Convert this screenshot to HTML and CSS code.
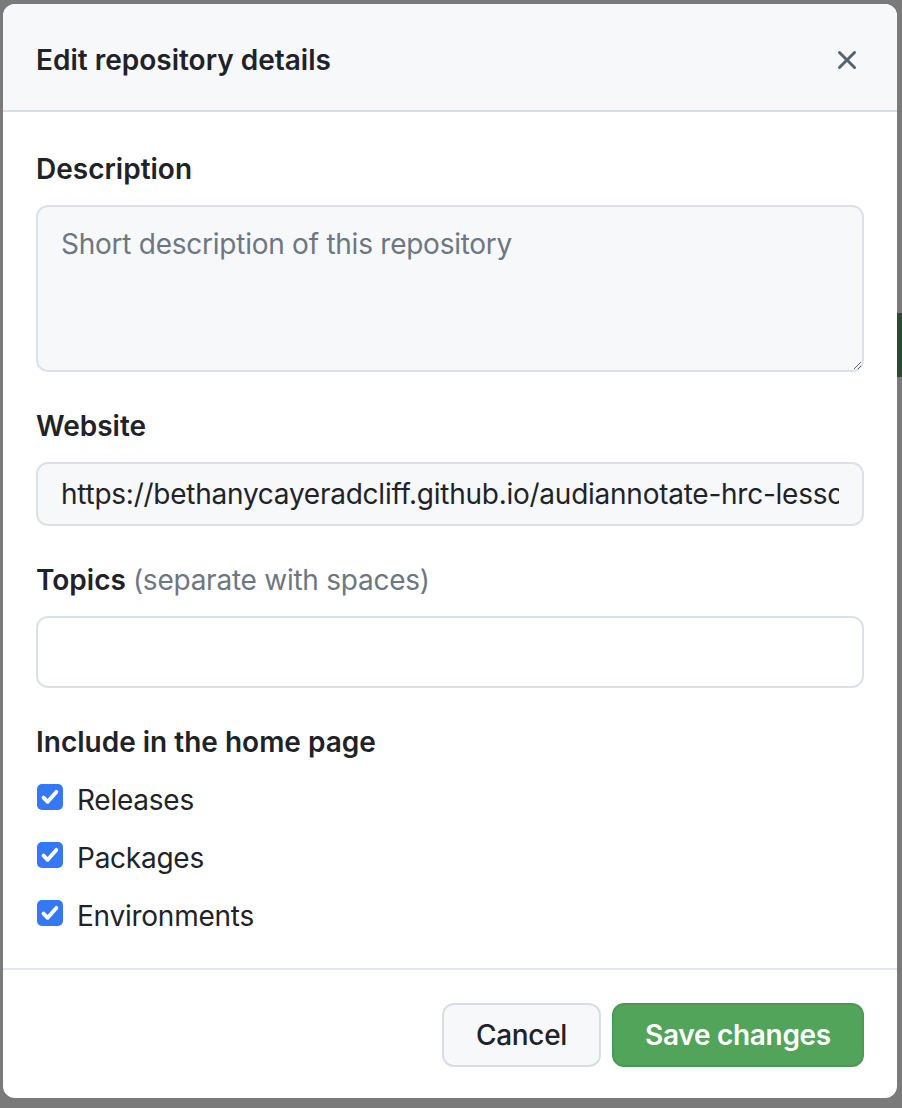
FILE: index.html
```html
<!DOCTYPE html>
<html lang="en">
<head>
<meta charset="utf-8">
<title>Edit repository details</title>
<link rel="stylesheet" href="styles.css">
</head>
<body>
<div class="backdrop">
  <div class="peek-green"></div>
</div>
<div class="dialog" role="dialog" aria-labelledby="dlg-title">
  <header class="dialog-header">
    <h1 id="dlg-title" class="dialog-title">Edit repository details</h1>
    <button class="close-btn" aria-label="Close">
      <svg viewBox="0 0 16 16" width="32" height="32" aria-hidden="true">
        <path fill="currentColor" d="M3.72 3.72a.75.75 0 0 1 1.06 0L8 6.94l3.220-3.22a.749.749 0 0 1 1.275.326.749.749 0 0 1-.215.734L9.06 8l3.22 3.22a.749.749 0 0 1-.326 1.275.749.749 0 0 1-.734-.215L8 9.06l-3.22 3.22a.751.751 0 0 1-1.042-.018.751.751 0 0 1-.018-1.042L6.94 8 3.72 4.78a.75.75 0 0 1 0-1.06Z"/>
      </svg>
    </button>
  </header>
  <div class="dialog-body">
    <div class="form-group">
      <label class="label" for="desc">Description</label>
      <textarea id="desc" class="textarea" placeholder="Short description of this repository"></textarea>
    </div>
    <div class="form-group">
      <label class="label" for="web">Website</label>
      <input id="web" class="input input-filled" type="text" value="https://bethanycayeradcliff.github.io/audiannotate-hrc-lessons/">
    </div>
    <div class="form-group">
      <label class="label" for="topics">Topics <span class="label-note">(separate with spaces)</span></label>
      <input id="topics" class="input input-empty" type="text">
    </div>
    <div class="form-group checks">
      <div class="label">Include in the home page</div>
      <label class="check-row"><span class="check-box"><svg viewBox="0 0 16 16" width="22" height="22"><path fill="none" stroke="#fff" stroke-width="2.8" stroke-linecap="round" stroke-linejoin="round" d="M3.3 8.4l3 3.1 6.3-7.2"/></svg></span><span class="check-label">Releases</span></label>
      <label class="check-row"><span class="check-box"><svg viewBox="0 0 16 16" width="22" height="22"><path fill="none" stroke="#fff" stroke-width="2.8" stroke-linecap="round" stroke-linejoin="round" d="M3.3 8.4l3 3.1 6.3-7.2"/></svg></span><span class="check-label">Packages</span></label>
      <label class="check-row"><span class="check-box"><svg viewBox="0 0 16 16" width="22" height="22"><path fill="none" stroke="#fff" stroke-width="2.8" stroke-linecap="round" stroke-linejoin="round" d="M3.3 8.4l3 3.1 6.3-7.2"/></svg></span><span class="check-label">Environments</span></label>
    </div>
  </div>
  <footer class="dialog-footer">
    <button class="btn btn-default">Cancel</button>
    <button class="btn btn-primary">Save changes</button>
  </footer>
</div>
</body>
</html>
```
FILE: styles.css
```css
* { box-sizing: border-box; }

html, body {
  margin: 0;
  padding: 0;
}

body {
  width: 902px;
  height: 1108px;
  background: #7a7a7a;
  font-family: Inter, "Liberation Sans", sans-serif;
  color: #1f2328;
  position: relative;
  overflow: hidden;
  padding: 4px 5px 0 3px;
}

.backdrop {
  position: absolute;
  inset: 0;
  z-index: 0;
}

.peek-green {
  position: absolute;
  right: 0;
  top: 313px;
  width: 6px;
  height: 64px;
  background: #2c4a2f;
}

.dialog {
  position: relative;
  z-index: 1;
  width: 894px;
  height: 1094px;
  background: #ffffff;
  border-radius: 12px;
  overflow: hidden;
  display: flex;
  flex-direction: column;
}

.dialog-header {
  height: 108px;
  flex: none;
  background: #f6f8fa;
  border-bottom: 2px solid #d8dee4;
  display: flex;
  align-items: center;
  justify-content: space-between;
  padding: 6px 30px 0 33px;
}

.dialog-title {
  margin: 0;
  font-size: 28px;
  line-height: 40px;
  font-weight: 600;
  color: #1f2328;
}

.close-btn {
  border: 0;
  background: transparent;
  color: #59636e;
  padding: 4px;
  display: flex;
  cursor: pointer;
}

.dialog-body {
  flex: 1;
  padding: 37px 33px 0 33px;
}

.form-group + .form-group {
  margin-top: 34px;
}

.label {
  display: block;
  font-size: 28px;
  line-height: 40px;
  font-weight: 600;
  color: #1f2328;
  margin-bottom: 16px;
}

.label-note {
  font-weight: 400;
  color: #6e7781;
  letter-spacing: -0.25px;
}

.textarea,
.input {
  display: block;
  width: 828px;
  font-family: inherit;
  font-size: 28px;
  line-height: 40px;
  letter-spacing: -0.25px;
  color: #1f2328;
  border: 2px solid #dde1e6;
  border-radius: 12px;
  outline: none;
  margin: 0;
}

.textarea {
  height: 167px;
  padding: 17px 23px 12px;
  background: #f6f8fa;
  resize: vertical;
}

.textarea::placeholder {
  color: #6e7781;
  opacity: 1;
}

.input {
  padding: 10px 23px;
}

.input-filled {
  height: 64px;
  background: #f6f8fa;
}

.input-empty {
  height: 72px;
  background: #ffffff;
}

.checks .label {
  margin-bottom: 8px;
}

.check-row {
  display: flex;
  align-items: flex-start;
  height: 58px;
  padding-top: 10px;
}

.check-box {
  width: 26px;
  height: 26px;
  margin: 4px 0 0 1px;
  border-radius: 5px;
  background: #3478f6;
  display: flex;
  align-items: center;
  justify-content: center;
  flex: none;
}

.check-label {
  margin-left: 14px;
  font-size: 28px;
  line-height: 40px;
  letter-spacing: -0.25px;
  color: #1f2328;
}

.dialog-footer {
  flex: none;
  border-top: 2px solid #e4e7eb;
  padding: 33px 33px 31px;
  display: flex;
  justify-content: flex-end;
  gap: 11px;
}

.btn {
  height: 64px;
  border-radius: 12px;
  font-family: inherit;
  font-size: 28px;
  font-weight: 500;
  letter-spacing: -0.3px;
  padding: 0;
  white-space: nowrap;
  cursor: pointer;
}

.btn-default {
  width: 159px;
  background: #f6f8fa;
  border: 2px solid #d8dee4;
  color: #1f2328;
}

.btn-primary {
  width: 252px;
  background: #52a45a;
  border: 2px solid #4b9a52;
  color: #ffffff;
  font-weight: 600;
}
```
